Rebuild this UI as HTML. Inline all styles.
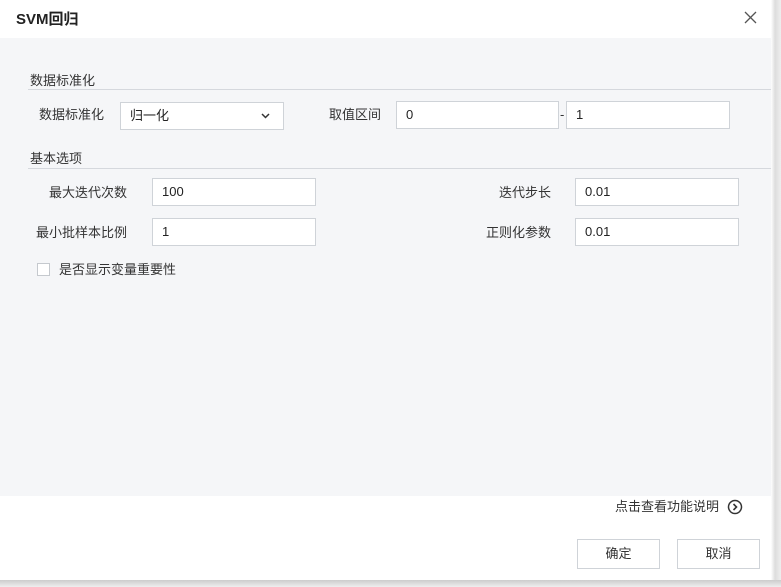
<!DOCTYPE html>
<html><head><meta charset="utf-8"><style>
*{box-sizing:border-box;margin:0;padding:0}
body{width:781px;height:587px;background:#fff;font-family:"Liberation Sans","Noto Sans CJK SC",sans-serif;font-size:13px;color:#333;position:relative;overflow:hidden}
.a{position:absolute}
.gray{left:0;top:38px;width:771px;height:458px;background:#f5f6f8}
.inp{position:absolute;background:#fff;border:1px solid #cfd3d8;height:28px;padding-left:9px;line-height:26px;font-size:13px;color:#222}
.lbl{position:absolute;font-size:13px;color:#333;line-height:16px}
.line{position:absolute;left:28px;width:743px;height:1px;background:#d5d8dd}
.btn{position:absolute;top:539px;width:83px;height:30px;border:1px solid #cfd3d8;background:#fff;text-align:center;line-height:28px;font-size:13px}
</style></head><body>
<div class="a" style="right:0;top:0;width:10px;height:587px;background:linear-gradient(90deg,#fff,#ddd 40%,#eee)"></div>
<div class="a" style="left:0;top:580px;width:781px;height:7px;background:linear-gradient(#ccc,#eee)"></div>
<div class="a" style="left:16px;top:8px;font-size:15px;font-weight:bold;color:#222">SVM回归</div>
<svg class="a" style="left:744px;top:11px" width="13" height="13"><path d="M1 1L12 12M12 1L1 12" stroke="#555" stroke-width="1.3"/></svg>
<div class="a gray"></div>
<div class="lbl" style="left:30px;top:73px">数据标准化</div>
<div class="line" style="top:89px"></div>
<div class="lbl" style="left:39px;top:107px">数据标准化</div>
<div class="inp" style="left:120px;top:102px;width:164px">归一化</div>
<svg class="a" style="left:261px;top:113px" width="9" height="6"><path d="M1 1L4.5 4.5L8 1" stroke="#333" stroke-width="1.5" fill="none"/></svg>
<div class="lbl" style="left:329px;top:107px">取值区间</div>
<div class="inp" style="left:396px;top:101px;width:163px">0</div>
<div class="lbl" style="left:560px;top:107px">-</div>
<div class="inp" style="left:566px;top:101px;width:164px">1</div>
<div class="lbl" style="left:30px;top:151px">基本选项</div>
<div class="line" style="top:168px"></div>
<div class="lbl" style="left:49px;top:185px">最大迭代次数</div>
<div class="inp" style="left:152px;top:178px;width:164px">100</div>
<div class="lbl" style="left:499px;top:185px">迭代步长</div>
<div class="inp" style="left:575px;top:178px;width:164px">0.01</div>
<div class="lbl" style="left:36px;top:225px">最小批样本比例</div>
<div class="inp" style="left:152px;top:218px;width:164px">1</div>
<div class="lbl" style="left:486px;top:225px">正则化参数</div>
<div class="inp" style="left:575px;top:218px;width:164px">0.01</div>
<div class="a" style="left:37px;top:263px;width:13px;height:13px;border:1px solid #c5c9ce;background:#fff"></div>
<div class="lbl" style="left:59px;top:262px">是否显示变量重要性</div>
<div class="lbl" style="left:615px;top:499px">点击查看功能说明</div>
<svg class="a" style="left:727px;top:499px" width="16" height="16"><circle cx="8" cy="8" r="6.5" stroke="#333" stroke-width="1.5" fill="none"/><path d="M6.5 5L9.5 8L6.5 11" stroke="#333" stroke-width="1.6" fill="none"/></svg>
<div class="btn" style="left:577px">确定</div>
<div class="btn" style="left:677px">取消</div>
</body></html>
